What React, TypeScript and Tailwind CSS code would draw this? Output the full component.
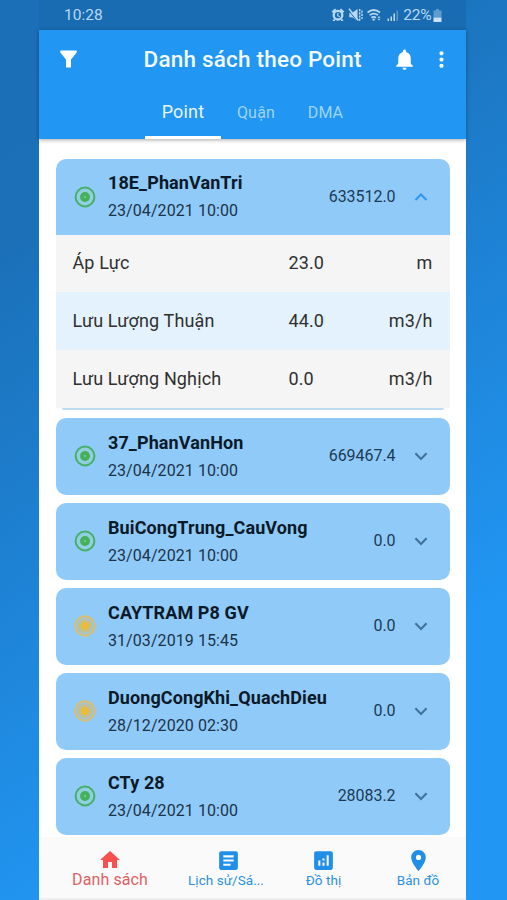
import React from "react";
import { MdAnalytics, MdArticle, MdHome, MdMoreVert, MdNotifications, MdPlace } from "react-icons/md";

type Station = { name: string; time: string; value: string; ok: boolean };

const activeStation: Station = { name: "18E_PhanVanTri", time: "23/04/2021 10:00", value: "633512.0", ok: true };

const stations: Station[] = [
  { name: "37_PhanVanHon", time: "23/04/2021 10:00", value: "669467.4", ok: true },
  { name: "BuiCongTrung_CauVong", time: "23/04/2021 10:00", value: "0.0", ok: true },
  { name: "CAYTRAM P8 GV", time: "31/03/2019 15:45", value: "0.0", ok: false },
  { name: "DuongCongKhi_QuachDieu", time: "28/12/2020 02:30", value: "0.0", ok: false },
  { name: "CTy 28", time: "23/04/2021 10:00", value: "28083.2", ok: true },
];

const readings = [
  { label: "Áp Lực", value: "23.0", unit: "m", bg: "bg-[#f5f5f5]" },
  { label: "Lưu Lượng Thuận", value: "44.0", unit: "m3/h", bg: "bg-[#e3f2fd]" },
  { label: "Lưu Lượng Nghịch", value: "0.0", unit: "m3/h", bg: "bg-[#f5f5f5]" },
];

function Target({ ok }: { ok: boolean }) {
  return ok ? (
    <svg className="size-[22px] shrink-0" viewBox="0 0 22 22" fill="none">
      <circle cx="11" cy="11" r="9.4" fill="#8fcfe0" stroke="#48ae68" strokeWidth="2" />
      <circle cx="11" cy="11" r="4.9" fill="#45b05a" />
      <circle cx="11" cy="11" r="1.3" fill="#6cc486" />
    </svg>
  ) : (
    <svg className="size-[22px] shrink-0" viewBox="0 0 22 22" fill="none">
      <circle cx="11" cy="11" r="9.7" fill="#a8c4c8" stroke="#d6bf76" strokeWidth="2" />
      <circle cx="11" cy="11" r="5.8" fill="#b9c0a0" stroke="#d3bd72" strokeWidth="1.3" />
      <circle cx="11" cy="11" r="3.9" fill="#ecbc37" />
    </svg>
  );
}

function StationHeader({ s, open = false }: { s: Station; open?: boolean }) {
  return (
    <div className={`flex items-center pl-[18px] pr-[22px] ${open ? "h-[75.5px]" : "h-[76.4px]"}`}>
      <Target ok={s.ok} />
      <div className="ml-[12.5px] flex flex-1 flex-col pt-px">
        <span className="text-[18px] leading-[26px] font-bold tracking-[0.1px] text-[#0b1a28]">{s.name}</span>
        <span className="pt-px text-[16px] leading-[27px] tracking-[0.07px] text-[#1b3348]">{s.time}</span>
      </div>
      <span className="text-[16px] tracking-[-0.05px] text-[#1b3a54]">{s.value}</span>
      <svg className="ml-[18px] h-3 w-[14px]" viewBox="0 0 14 12" fill="none">
        <path
          d={open ? "M1.4 9.1 7 3.5l5.6 5.6" : "M1.4 3.3 7 8.9l5.6-5.6"}
          stroke={open ? "#2d98ee" : "#3f739b"}
          strokeWidth="2.1"
        />
      </svg>
    </div>
  );
}

function StatusIcons() {
  return (
    <svg className="h-4 w-[71px]" viewBox="0 0 71 16" fill="#b9d9f2">
      <circle cx="7" cy="8.200" r="4.300" fill="none" stroke="#b9d9f2" strokeWidth="2.300" />
      <path d="M.6 4.600 4 1.500l1.300 1.400-3.300 3zM13.400 4.600 10 1.500 8.700 2.900l3.300 3z" />
      <path d="M6.800 6v2.700l2 1" fill="none" stroke="#b9d9f2" strokeWidth="1.100" />
      <path d="m3.200 11.200-1.700 2.800h2.700zM10.800 11.200l1.700 2.800H9.800z" />
      <path d="M18.300 5.700h3L26.500 2v12l-5.200-3.700h-3z" />
      <path d="m18 1.800 9.500 11.700" stroke="#b9d9f2" strokeWidth="1.400" />
      <path d="m17.600 3.600 9 11" stroke="#1a6cb2" strokeWidth="1" />
      <path d="M28.700 2v12M31 3.500v9" fill="none" stroke="#b9d9f2" strokeWidth="1.400" strokeDasharray="2.200 1" />
      <path d="M36.500 5.500q6.200-5 12.500 0M38.600 8.200q4.200-3.300 8.400 0M40.400 10.700q2.300-1.700 4.600 0" fill="none" stroke="#b9d9f2" strokeWidth="1.700" />
      <circle cx="42.700" cy="12.600" r="1.200" />
      <path d="m46.500 10.700 1.500-1.700 1.500 1.700zm0 1.100 1.500 1.700 1.500-1.700z" />
      <path d="M56.500 11.500H58V14h-1.500zM59.500 9.500H61V14h-1.500zM62.500 6.500H64V14h-1.500z" />
      <path d="M65.500 3.500H67V14h-1.500z" opacity=".4" />
    </svg>
  );
}

export default function App() {
  return (
    <div className="flex h-[900px] w-[507px] justify-center overflow-hidden bg-[linear-gradient(145deg,#1b6fb6_0%,#1b70b8_20%,#2196f3_76%)] pr-[2px] font-['Roboto','Noto_Sans',sans-serif]">
      <main className="flex w-[427px] flex-col bg-white">
        <div className="flex h-[30px] items-center bg-[#1a6cb2] pl-[25px] pr-[24px] text-[#b9d9f2]">
          <span className="flex-1 text-[15.5px] leading-[30px]">10:28</span>
          <StatusIcons />
          <span className="ml-[1px] text-[15.5px] leading-[30px] tracking-[-0.2px]">22%</span>
          <svg className="ml-[1.5px] h-[13px] w-[9px]" viewBox="0 0 9 13">
            <path d="M3 0h3v1.500h2.500v7h-8v-7H3z" fill="#5e9dd0" />
            <path d="M.5 8.500h8V13h-8z" fill="#c8e2f6" />
          </svg>
        </div>

        <header className="relative z-10 flex h-[109px] flex-col bg-[#2196f3] shadow-[0_1px_4px_rgba(0,0,0,0.35)]">
          <div className="flex h-[58px] items-center pl-[21px] pr-[12.5px]">
            <svg className="h-[18px] w-[17px]" viewBox="0 0 17 18" fill="#fff">
              <path d="M.3.500h16.400v2L11 9.500v8H6v-8L.3 2.500z" />
            </svg>
            <h1 className="ml-[66.5px] flex-1 whitespace-nowrap text-[22.5px] leading-[28px] font-medium tracking-[0.2px] text-[#f4faff]">
              Danh sách theo Point
            </h1>
            <MdNotifications className="size-[25px] text-white" />
            <MdMoreVert className="ml-[12px] size-[25px] text-white" />
          </div>
          <nav className="ml-[106px] flex h-[51px] leading-[48px]">
            <span className="w-[76px] border-b-3 border-white text-center text-[18px] tracking-[0.2px] text-[#e8f5ff]">Point</span>
            <span className="w-[70px] pt-px text-center text-[16px] tracking-[0.2px] text-[#9fd5fb]">Quận</span>
            <span className="w-[69px] pt-px text-center text-[16px] tracking-[0.1px] text-[#9fd5fb]">DMA</span>
          </nav>
        </header>

        <section className="flex flex-1 flex-col gap-[8.600px] px-[16.500px] pt-5">
          <div>
            <div className="rounded-t-[10px] bg-[#90caf9]">
              <StationHeader open s={activeStation} />
            </div>
            {readings.map((r) => (
              <div
                key={r.label}
                className={`flex h-[57.800px] items-center px-[17px] pb-px text-[18px] tracking-[0.13px] text-[#303030] ${r.bg}`}
              >
                <span className="w-[216px]">{r.label}</span>
                <span className="flex-1">{r.value}</span>
                <span>{r.unit}</span>
              </div>
            ))}
            <div className="mx-[6px] h-[1.800px] rounded-b-full bg-[#bfdcf5]" />
          </div>
          {stations.map((s) => (
            <div key={s.name} className="rounded-[10px] bg-[#90caf9]">
              <StationHeader s={s} />
            </div>
          ))}
        </section>

        <footer className="flex h-[63px] shrink-0 border-b-2 border-[#efefef] bg-[#fafafa] pt-[11px] text-[#2e90de]">
          <div className="flex w-[142px] flex-col items-center text-[#e06065]">
            <MdHome className="size-[24px] text-[#f7504f]" />
            <span className="mt-[-2px] text-[16px] leading-[20px] tracking-[0.1px]">Danh sách</span>
          </div>
          <div className="flex w-[95px] flex-col items-center">
            <MdArticle className="size-[25px] text-[#218fe8]" />
            <span className="mt-[-2px] mr-[5px] text-[13.500px] leading-[19px] tracking-[0.05px]">Lịch sử/Sá...</span>
          </div>
          <div className="flex w-[95px] flex-col items-center">
            <MdAnalytics className="size-[25px] text-[#218fe8]" />
            <span className="mt-[-2px] text-[13.500px] leading-[19px] tracking-[0.05px]">Đồ thị</span>
          </div>
          <div className="flex w-[95px] flex-col items-center">
            <MdPlace className="size-[25px] text-[#218fe8]" />
            <span className="mt-[-2px] mr-px text-[13.500px] leading-[19px] tracking-[0.05px]">Bản đồ</span>
          </div>
        </footer>
      </main>
    </div>
  );
}
